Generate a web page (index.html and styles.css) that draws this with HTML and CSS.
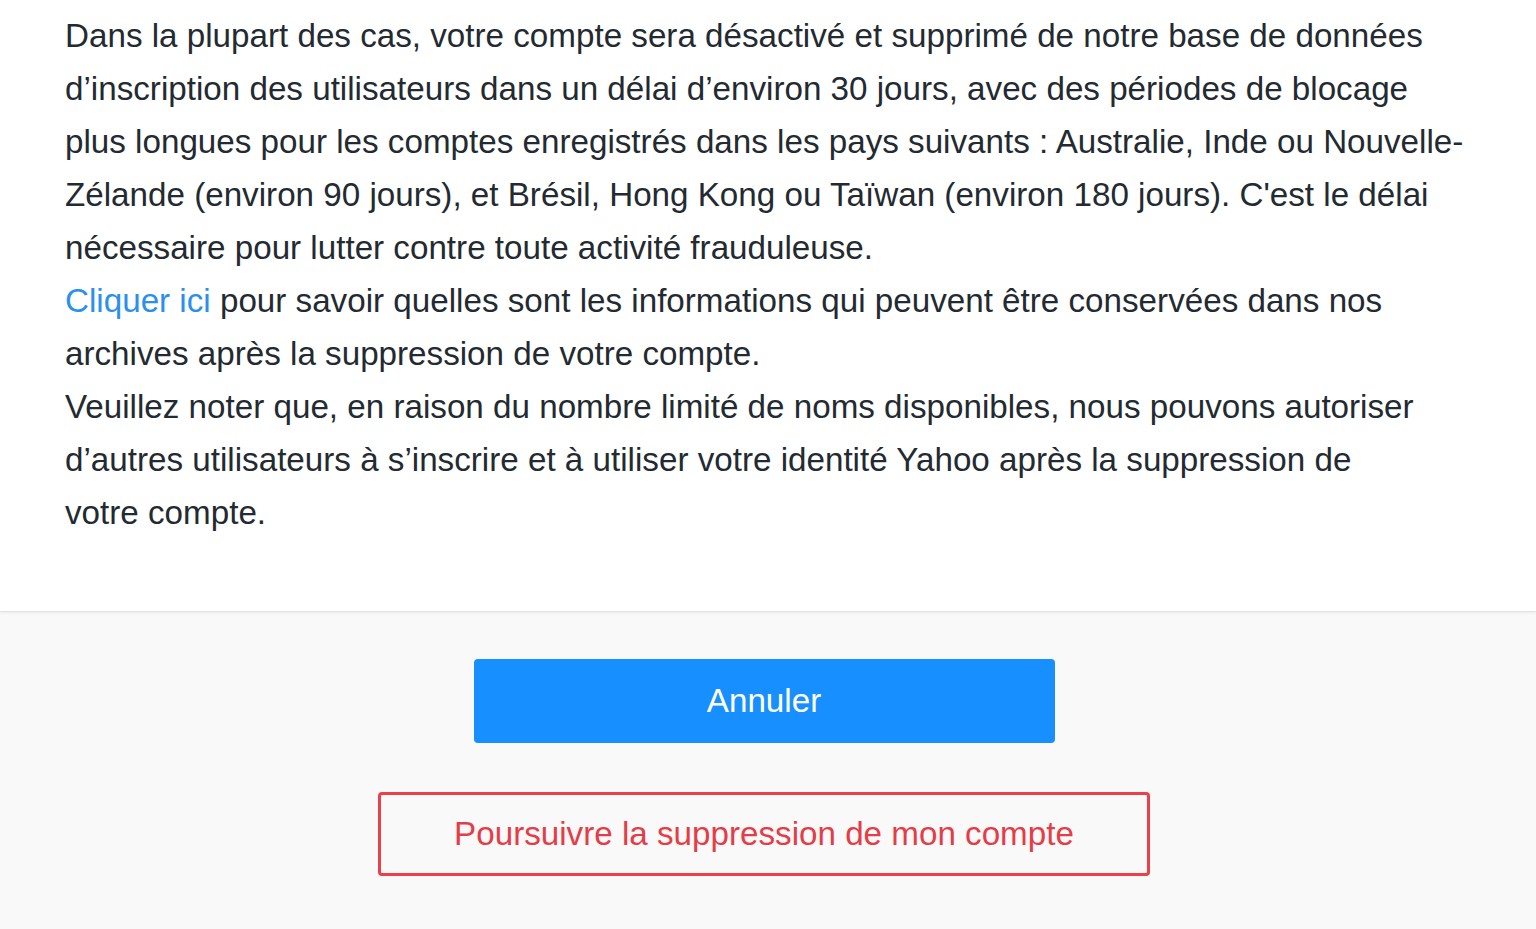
FILE: index.html
```html
<!DOCTYPE html>
<html lang="fr">
<head>
    <meta charset="UTF-8">
    <meta name="viewport" content="width=device-width, initial-scale=1.0">
    <title>Supprimer mon compte</title>
    <link rel="stylesheet" href="styles.css">
</head>
<body>
    <div class="content">
        <p class="notice">
            Dans la plupart des cas, votre compte sera désactivé et supprimé de notre base de données d’inscription des utilisateurs dans un délai d’environ 30 jours, avec des périodes de blocage plus longues pour les comptes enregistrés dans les pays suivants : Australie, Inde ou Nouvelle-Zélande (environ 90 jours), et Brésil, Hong Kong ou Taïwan (environ 180 jours). C'est le délai nécessaire pour lutter contre toute activité frauduleuse.<br>
            <a href="#" class="link">Cliquer ici</a> pour savoir quelles sont les informations qui peuvent être conservées dans nos archives après la suppression de votre compte.<br>
            Veuillez noter que, en raison du nombre limité de noms disponibles, nous pouvons autoriser d’autres utilisateurs à s’inscrire et à utiliser votre identité Yahoo après la suppression de votre&nbsp;compte.
        </p>
    </div>

    <div class="actions">
        <button class="btn-cancel">Annuler</button>
        <button class="btn-delete">Poursuivre la suppression de mon compte</button>
    </div>
</body>
</html>
```

FILE: styles.css
```css
body {
    font-family: "Liberation Sans", Arial, sans-serif;
    margin: 0;
    padding: 0;
    background-color: #f9f9f9;
    color: #232a31;
}

.content {
    background-color: #ffffff;
    padding: 9px 0 72px 65px;
    border-bottom: 1px solid #e4e4e4;
    box-shadow: 0 1px 3px rgba(0, 0, 0, 0.06);
}

.notice {
    margin: 0;
    width: 1410px;
    font-size: 33.2px;
    line-height: 53px;
}

.link {
    color: #2b8fee;
    text-decoration: none;
}

.actions {
    display: flex;
    flex-direction: column;
    align-items: center;
    gap: 49px;
    padding: 47px 8px 54px 0;
}

.btn-cancel,
.btn-delete {
    font-family: "Liberation Sans", Arial, sans-serif;
    font-size: 33.2px;
    height: 84px;
    border-radius: 4px;
    cursor: pointer;
}

.btn-cancel {
    width: 581px;
    background-color: #188fff;
    color: #ffffff;
    border: none;
}

.btn-delete {
    width: 772px;
    background-color: transparent;
    color: #e53d47;
    border: 3px solid #eb3f4a;
}
```
